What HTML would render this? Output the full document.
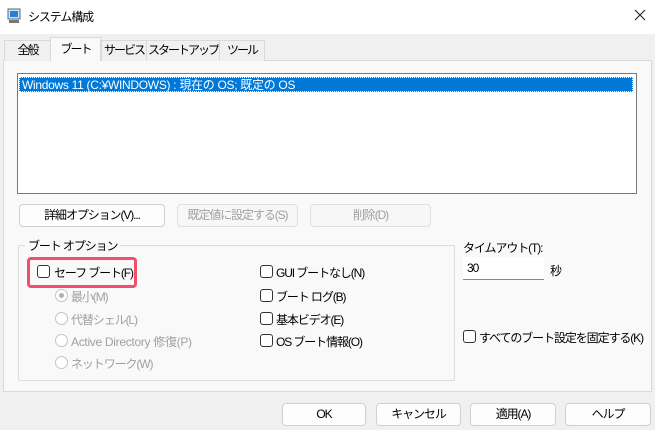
<!DOCTYPE html><html><head><meta charset="utf-8"><style>
*{box-sizing:border-box;margin:0;padding:0}
body{width:655px;height:430px;background:#f0f0f0;font-family:"Liberation Sans","Noto Sans CJK JP",sans-serif;font-size:12px;letter-spacing:-1.1px;color:#000;position:relative;overflow:hidden}
.a{position:absolute;white-space:nowrap}
.title{left:0;top:0;width:655px;height:34px;background:#fff}
.tab{top:40px;height:21px;border:1px solid #d9d9d9;border-bottom:none;background:#f0f0f0;text-align:center;line-height:19px;overflow:hidden;letter-spacing:-2px}
.panel{left:3px;top:60px;width:649px;height:332px;background:#f9f9f9;border:1px solid #d9d9d9}
.btn{height:23px;border:1px solid #d0d0d0;border-radius:4px;background:#fdfdfd;text-align:center;line-height:21px}
.dis{color:#a0a0a0;border-color:#e0e0e0;background:#f7f7f7}
.cb{width:13px;height:13px;border:1px solid #333;border-radius:3px;background:#fff}
.rb{width:13px;height:13px;border:1px solid #c4c4c4;border-radius:50%;background:#fff}
.g{color:#a0a0a0}
.l{letter-spacing:-0.3px}
</style></head><body>
<div class="a title"></div>
<svg class="a" style="left:6px;top:8px" width="16" height="16"><rect x="2" y="1" width="12" height="10" fill="#cfe3f5" stroke="#4a6a8a"/><rect x="4" y="3" width="8" height="6" fill="#2f7fd0"/><rect x="3" y="12" width="10" height="3" fill="#777"/></svg>
<div class="a" style="left:28px;top:8px">システム構成</div>
<svg class="a" style="left:634px;top:9px" width="12" height="12"><path d="M1 1L11 11M11 1L1 11" stroke="#222" stroke-width="1.1"/></svg>
<div class="a panel"></div>
<div class="a tab" style="left:4px;width:47px">全般</div>
<div class="a tab" style="left:50px;top:37px;height:24px;width:51px;background:#f9f9f9;line-height:22px">ブート</div>
<div class="a tab" style="left:101px;width:46px">サービス</div>
<div class="a tab" style="left:146px;width:74px">スタートアップ</div>
<div class="a tab" style="left:219px;width:46px">ツール</div>
<div class="a" style="left:17px;top:73px;width:620px;height:121px;background:#fff;border:1px solid #7a7a7a"></div>
<div class="a l" style="left:19px;top:77px;width:614px;height:15px;background:#0078d7;color:#fff;line-height:14px;padding-left:2px;border:1px dotted #fff">Windows 11 (C:¥WINDOWS) : 現在の OS; 既定の OS</div>
<div class="a btn" style="left:19px;top:204px;width:146px">詳細オプション(V)...</div>
<div class="a btn dis" style="left:177px;top:204px;width:121px">既定値に設定する(S)</div>
<div class="a btn dis" style="left:310px;top:204px;width:121px">削除(D)</div>
<div class="a" style="left:18px;top:245px;width:437px;height:136px;border:1px solid #dcdcdc;border-radius:2px"></div>
<div class="a" style="left:25px;top:237px;background:#f9f9f9;padding:0 3px">ブート オプション</div>
<div class="a" style="left:27px;top:257px;width:110px;height:31px;border:3px solid #f0506a;border-radius:4px"></div>
<div class="a cb" style="left:37px;top:265px"></div><div class="a" style="left:54px;top:264px">セーフ ブート(F)</div>
<div class="a rb" style="left:55px;top:289px"><div style="width:5px;height:5px;border-radius:50%;background:#b0b0b0;margin:3px"></div></div><div class="a g" style="left:71px;top:288px">最小(M)</div>
<div class="a rb" style="left:55px;top:312px"></div><div class="a g" style="left:71px;top:311px">代替シェル(L)</div>
<div class="a rb" style="left:55px;top:334px"></div><div class="a g l" style="left:71px;top:333px">Active Directory 修復(P)</div>
<div class="a rb" style="left:55px;top:356px"></div><div class="a g" style="left:71px;top:355px">ネットワーク(W)</div>
<div class="a cb" style="left:260px;top:265px"></div><div class="a" style="left:276px;top:264px">GUI ブートなし(N)</div>
<div class="a cb" style="left:260px;top:289px"></div><div class="a" style="left:276px;top:288px">ブート ログ(B)</div>
<div class="a cb" style="left:260px;top:312px"></div><div class="a" style="left:276px;top:311px">基本ビデオ(E)</div>
<div class="a cb" style="left:260px;top:334px"></div><div class="a" style="left:276px;top:333px">OS ブート情報(O)</div>
<div class="a" style="left:463px;top:239px">タイムアウト(T):</div>
<div class="a" style="left:463px;top:257px;width:81px;height:23px;background:#fff;border-bottom:1px solid #888;padding:4px 0 0 4px">30</div>
<div class="a" style="left:550px;top:262px">秒</div>
<div class="a cb" style="left:463px;top:330px"></div><div class="a" style="left:479px;top:329px">すべてのブート設定を固定する(K)</div>
<div class="a btn" style="left:282px;top:403px;width:84px">OK</div>
<div class="a btn" style="left:376px;top:403px;width:85px">キャンセル</div>
<div class="a btn" style="left:470px;top:403px;width:86px">適用(A)</div>
<div class="a btn" style="left:565px;top:403px;width:86px">ヘルプ</div>
</body></html>
